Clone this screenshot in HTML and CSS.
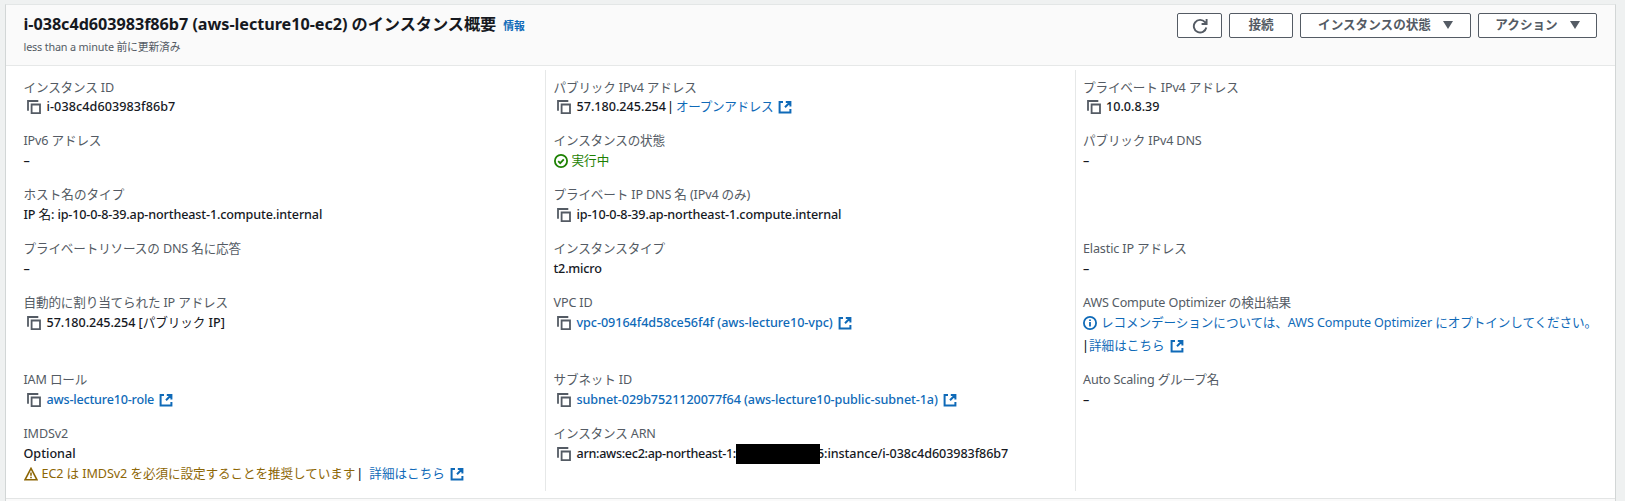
FILE: index.html
```html
<!DOCTYPE html>
<html lang="ja">
<head>
<meta charset="utf-8">
<title>インスタンス概要</title>
<link rel="stylesheet" href="styles.css">
</head>
<body>
<svg width="0" height="0" class="defs">
<symbol id="copy" viewBox="0 0 14 14"><path d="M1 10.8V1h10.3M4.6 4.5H13v8.6H4.6z"/></symbol>
<symbol id="ext" viewBox="0 0 14 14"><path d="M5 2H1.6v10.6h10.8V9M7.8 1.9h4.6v4.6M12 2.3 7 7.3"/></symbol>
<symbol id="ok" viewBox="0 0 14 14"><circle cx="7" cy="7" r="6.1"/><path d="m4.2 7.1 2 2 3.6-3.8"/></symbol>
<symbol id="info" viewBox="0 0 14 14"><circle cx="7" cy="7" r="6.1"/><path d="M7 6v4.6M7 3.4v1.7"/></symbol>
<symbol id="warn" viewBox="0 0 14 14"><path d="M7 1.4 13 12.8H1zM7 5.4v3.4M7 9.7v1.6"/></symbol>
</svg>
<main class="panel">
<header class="head">
<div>
<h1><span class="title">i-038c4d603983f86b7 (aws-lecture10-ec2) のインスタンス概要</span><a class="info">情報</a></h1>
<p class="updated">less than a minute 前に更新済み</p>
</div>
<div class="actions">
<button class="btn refresh"><svg viewBox="0 0 16 16"><path d="M14.3 9.5A6.3 6.3 0 1 1 13 4.2L14 5.4M14.6 1v5H9.6"/></svg></button>
<button class="btn connect">接続</button>
<button class="btn state">インスタンスの状態<i class="caret"></i></button>
<button class="btn action">アクション<i class="caret"></i></button>
</div>
</header>
<div class="cols">
<section class="col">
<div class="item"><div class="label">インスタンス ID</div><div class="val"><svg class="ic copy"><use href="#copy"/></svg><span class="wide">i-038c4d603983f86b7</span></div></div>
<div class="item"><div class="label">IPv6 アドレス</div><div class="val">–</div></div>
<div class="item"><div class="label even">ホスト名のタイプ</div><div class="val"><span class="tight">IP <span class="ja">名</span>: ip-10-0-8-39.ap-northeast-1.compute.internal</span></div></div>
<div class="item"><div class="label">プライベートリソースの DNS 名に応答</div><div class="val">–</div></div>
<div class="item tall"><div class="label">自動的に割り当てられた IP アドレス</div><div class="val"><svg class="ic copy"><use href="#copy"/></svg><span class="near">57.180.245.254 [<span class="ja">パブリック</span> IP]</span></div></div>
<div class="item"><div class="label">IAM ロール</div><div class="val"><svg class="ic copy"><use href="#copy"/></svg><a class="tighter">aws-lecture10-role</a><svg class="ic ext"><use href="#ext"/></svg></div></div>
<div class="item"><div class="label">IMDSv2</div><div class="val">Optional</div><div class="val warn"><svg class="ic st"><use href="#warn"/></svg><span class="snug ja">EC2 は IMDSv2 を必須に設定することを推奨しています</span><b class="bar">|</b><a class="ja">詳細はこちら</a><svg class="ic ext"><use href="#ext"/></svg></div></div>
</section>
<section class="col">
<div class="item"><div class="label">パブリック IPv4 アドレス</div><div class="val"><svg class="ic copy"><use href="#copy"/></svg><span>57.180.245.254</span><b class="sep">|</b><a class="kana ja">オープンアドレス</a><svg class="ic ext"><use href="#ext"/></svg></div></div>
<div class="item"><div class="label">インスタンスの状態</div><div class="val ok"><svg class="ic st"><use href="#ok"/></svg><span class="ja">実行中</span></div></div>
<div class="item"><div class="label">プライベート IP DNS 名 (IPv4 のみ)</div><div class="val"><svg class="ic copy"><use href="#copy"/></svg><span class="tight">ip-10-0-8-39.ap-northeast-1.compute.internal</span></div></div>
<div class="item"><div class="label">インスタンスタイプ</div><div class="val"><span class="tighter">t2.micro</span></div></div>
<div class="item tall"><div class="label">VPC ID</div><div class="val"><svg class="ic copy"><use href="#copy"/></svg><a class="near">vpc-09164f4d58ce56f4f (aws-lecture10-vpc)</a><svg class="ic ext"><use href="#ext"/></svg></div></div>
<div class="item"><div class="label">サブネット ID</div><div class="val"><svg class="ic copy"><use href="#copy"/></svg><a class="snug">subnet-029b7521120077f64 (aws-lecture10-public-subnet-1a)</a><svg class="ic ext"><use href="#ext"/></svg></div></div>
<div class="item"><div class="label">インスタンス ARN</div><div class="val"><svg class="ic copy"><use href="#copy"/></svg><span class="arn">arn:aws:ec2:ap-northeast-1:</span><i class="mask"></i><span class="tail snug">5:instance/i-038c4d603983f86b7</span></div></div>
</section>
<section class="col">
<div class="item"><div class="label">プライベート IPv4 アドレス</div><div class="val"><svg class="ic copy"><use href="#copy"/></svg><span>10.0.8.39</span></div></div>
<div class="item double"><div class="label">パブリック IPv4 DNS</div><div class="val">–</div></div>
<div class="item"><div class="label">Elastic IP アドレス</div><div class="val">–</div></div>
<div class="item tall"><div class="label">AWS Compute Optimizer の検出結果</div><div class="val"><svg class="ic st blue"><use href="#info"/></svg><a class="snug ja">レコメンデーションについては、AWS Compute Optimizer にオプトインしてください。</a></div><div class="val second"><b class="lead">|</b><a class="ja">詳細はこちら</a><svg class="ic ext"><use href="#ext"/></svg></div></div>
<div class="item"><div class="label">Auto Scaling グループ名</div><div class="val">–</div></div>
</section>
</div>
</main>
</body>
</html>
```
FILE: styles.css
```css
* { box-sizing: border-box; }
body { margin: 0; height: 501px; overflow: hidden; background: #eff1f1; padding: 4px 9px 0 5px; font-family: "Noto Sans", "Noto Sans CJK JP", sans-serif; font-size: 12.6px; color: #16191f; }
.defs { position: absolute; }
.panel { height: 497px; background: #fafafa; border: 1px solid #d2d6d6; border-top-color: #e3e6e6; border-bottom: 0; }
.head { height: 61px; display: flex; justify-content: space-between; padding: 8px 18px 0 17.5px; border-bottom: 1px solid #e6e8e8; }
h1 { margin: 0; font-size: 16.2px; line-height: 22px; font-weight: 700; display: flex; align-items: baseline; white-space: nowrap; }
.title { letter-spacing: -0.04px; }
.info { font-size: 10.8px; color: #0f6ab8; margin-left: 7px; }
.updated { margin: 0; font-size: 10.8px; line-height: 20px; color: #545b64; letter-spacing: -0.16px; }
.actions { display: flex; gap: 7px; }
.btn { height: 25px; border: 1px solid #545b64; border-radius: 2px; background: #fff; color: #545b64; font: inherit; font-weight: 700; line-height: 20px; padding: 0 0 2px; display: flex; align-items: center; justify-content: center; }
.refresh { width: 45px; padding: 0; }
.refresh svg { width: 16px; height: 16px; fill: none; stroke: #545b64; stroke-width: 1.9; }
.connect { width: 64px; }
.state { width: 171px; }
.action { width: 119px; }
.caret { border: 5px solid transparent; border-top: 8px solid #545b64; border-bottom: 0; margin-left: 12px; }
.cols { height: 433px; background: #fff; border-bottom: 1px solid #e3e5e5; padding: 4px 0 7px; display: grid; grid-template-columns: 539px 529.5px 1fr; }
.col { padding: 6.5px 0 0 7.5px; border-left: 1px solid #e6e8e8; }
.col:first-child { padding-left: 17.5px; border-left: 0; }
.item { height: 53.95px; }
.item.tall { height: 77.2px; }
.item.double { height: 107.9px; }
.label, .val { height: 20.3px; line-height: 20.3px; white-space: nowrap; }
.label { color: #545b64; letter-spacing: -0.15px; line-height: 21.1px; }
.label.even { letter-spacing: 0; }
.val { display: flex; align-items: center; font-weight: 500; }
.val.second { margin-top: 3px; }
.val a { color: #0f6ab8; }
.val .ja { font-weight: 400; }
.wide { letter-spacing: 0.08px; }
.near { letter-spacing: -0.05px; }
.snug { letter-spacing: -0.08px; }
.tight { letter-spacing: -0.14px; }
.tighter { letter-spacing: -0.2px; }
.kana { letter-spacing: -0.35px; }
.arn { letter-spacing: -0.3px; }
.ic { fill: none; stroke: #545b64; stroke-width: 1.8; width: 14px; height: 14px; flex: none; }
.copy { margin: 0 5.5px 0 3.5px; }
.val .ext { stroke: #0f6ab8; stroke-width: 2; margin-left: 5px; }
.st { margin-right: 4px; stroke: currentColor; }
.warn .st { stroke-width: 1.6; }
.val .blue { stroke: #0f6ab8; }
.ok { color: #1d8102; }
.warn { color: #8d6605; }
.sep, .bar, .lead { color: #16191f; font-weight: 500; width: 7px; text-align: center; }
.sep { margin: 0 2px 0 1px; }
.bar { margin: 0 6px 0 1px; }
.lead { width: 5px; margin-right: 2px; margin-left: -1px; }
.mask { width: 84px; height: 20px; background: #000; position: relative; z-index: 1; }
.tail { margin-left: -3px; }
```
